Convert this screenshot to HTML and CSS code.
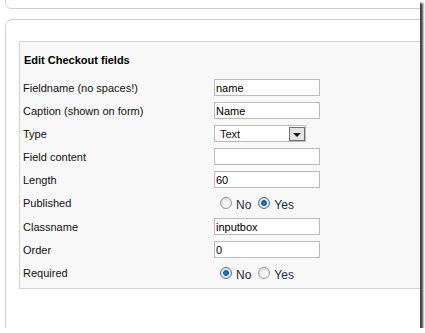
FILE: index.html
```html
<!DOCTYPE html>
<html lang="en">
<head>
    <meta charset="UTF-8">
    <title>Edit Checkout fields</title>
    <link rel="stylesheet" href="styles.css">
</head>
<body>
    <div class="shot">
        <div class="top-panel"></div>

        <div class="panel">
            <div class="field-box">
                <h3>Edit Checkout fields</h3>

                <div class="form-grid">
                    <label>Fieldname (no spaces!)</label>
                    <div><input type="text" class="inputbox" value="name"></div>

                    <label>Caption (shown on form)</label>
                    <div><input type="text" class="inputbox" value="Name"></div>

                    <label>Type</label>
                    <div>
                        <div class="select">
                            <span class="select-text">Text</span>
                            <span class="select-btn"><span class="arrow"></span></span>
                        </div>
                    </div>

                    <label>Field content</label>
                    <div><input type="text" class="inputbox" value=""></div>

                    <label>Length</label>
                    <div><input type="text" class="inputbox" value="60"></div>

                    <label>Published</label>
                    <div class="radios">
                        <span class="radio"></span><span class="radio-label">No</span>
                        <span class="radio checked"></span><span class="radio-label">Yes</span>
                    </div>

                    <label>Classname</label>
                    <div><input type="text" class="inputbox" value="inputbox"></div>

                    <label>Order</label>
                    <div><input type="text" class="inputbox" value="0"></div>

                    <label>Required</label>
                    <div class="radios">
                        <span class="radio checked"></span><span class="radio-label">No</span>
                        <span class="radio"></span><span class="radio-label">Yes</span>
                    </div>
                </div>
            </div>
        </div>
    </div>
</body>
</html>
```

FILE: styles.css
```css
html, body {
    margin: 0;
    padding: 0;
    background-color: #fff;
    font-family: "Liberation Sans", Arial, sans-serif;
    font-size: 11px;
    color: #000;
}

/* screenshot frame with drop shadow */
.shot {
    width: 420px;
    height: 328px;
    overflow: hidden;
    background-color: #fff;
    box-shadow: 3px 3px 2px rgba(0, 0, 0, 0.75);
}

.top-panel {
    margin: -20px 0 0 5px;
    width: 440px;
    height: 27px;
    border: 1px solid #cfcfcf;
    border-radius: 6px;
}

.panel {
    margin: 10px 0 0 5px;
    width: 440px;
    height: 340px;
    padding: 21px 0 0 13px;
    border: 1px solid #cfcfcf;
    border-radius: 7px;
    box-sizing: border-box;
}

.field-box {
    background-color: #f8f8f8;
    border: 1px solid #d4d4d4;
    width: 440px;
    height: 248px;
    box-sizing: border-box;
    padding: 0 0 0 3px;
}

.field-box h3 {
    margin: 0;
    height: 34px;
    line-height: 36px;
    font-size: 11px;
    font-weight: bold;
    color: #000;
    padding-left: 1px;
}

.form-grid {
    display: grid;
    grid-template-columns: 191px auto;
    grid-template-rows: 23px 23px 23px 23px 23px 24px 23px 23px 24px;
    align-items: center;
}

.form-grid label {
    color: #111;
}

.inputbox {
    display: block;
    width: 106px;
    height: 17px;
    box-sizing: border-box;
    margin: 0;
    padding: 0 1px;
    border: 1px solid #bcbcbc;
    background-color: #fff;
    font-family: "Liberation Sans", Arial, sans-serif;
    font-size: 11px;
    color: #000;
    outline: none;
}

/* fake select box */
.select {
    display: flex;
    align-items: center;
    width: 92px;
    height: 17px;
    box-sizing: border-box;
    border: 1px solid #bcbcbc;
    background-color: #fff;
}

.select-text {
    flex: 1;
    padding-left: 5px;
    color: #111;
}

.select-btn {
    display: flex;
    align-items: center;
    justify-content: center;
    width: 16px;
    height: 14px;
    border: 1px solid #6e6e6e;
    background-color: #e4e4e4;
    box-sizing: border-box;
}

.arrow {
    width: 0;
    height: 0;
    margin-top: 3px;
    border-left: 4px solid transparent;
    border-right: 4px solid transparent;
    border-top: 4px solid #111;
}

/* radio buttons */
.radios {
    display: flex;
    align-items: center;
    padding-left: 6px;
}

.radio {
    width: 12px;
    height: 12px;
    box-sizing: border-box;
    border: 1px solid #9a9a9a;
    border-radius: 50%;
    background: radial-gradient(circle at 60% 65%, #fff 0, #f2f2f2 40%, #cfcfcf 100%);
}

.radio.checked {
    border-color: #5c6e86;
    background: radial-gradient(circle at 50% 50%, #2b8bd0 0, #1a5f9c 30%, #1a5f9c 36%, #e8eef4 46%, #c8d0d8 100%);
}

.radio-label {
    margin: 3px 7px 0 4px;
    font-size: 12px;
    color: #1f2a44;
}
```
